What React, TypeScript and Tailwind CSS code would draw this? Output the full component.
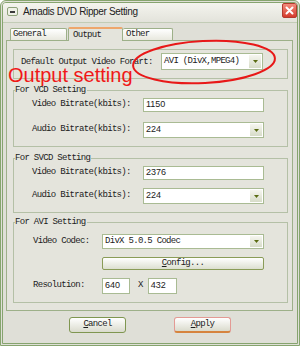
import React from "react";

const MONO = "font-['Liberation_Mono',monospace] text-[9px] tracking-[-0.7px] text-[#1c1c1c]";
const SANS = "font-['Liberation_Sans',Arial,sans-serif]";

function Arrow() {
  return (
    <div className="w-[12px] self-stretch my-[1px] mr-[1px] bg-gradient-to-b from-[#f6f6f0] to-[#d7dcc8] flex items-center justify-center">
      <svg width="5" height="3" viewBox="0 0 5 3">
        <path d="M0 0H5L2.5 3Z" fill="#5a6b12" />
      </svg>
    </div>
  );
}

function Select({ value, w, h, mono = false }: { value: string; w: string; h: string; mono?: boolean }) {
  return (
    <div className={`${w} ${h} bg-white border border-[#a9bb93] flex items-center`}>
      <span className={`flex-1 pl-[2px] whitespace-nowrap ${mono ? MONO : `${SANS} text-[9px] text-[#222]`}`}>{value}</span>
      <Arrow />
    </div>
  );
}

function Input({ value, w, h }: { value: string; w: string; h: string }) {
  return (
    <div className={`${w} ${h} bg-white border border-[#a9bb93] flex items-center`}>
      <span className={`${SANS} pl-[2px] text-[9px] text-[#222]`}>{value}</span>
    </div>
  );
}

function Legend({ children }: { children: React.ReactNode }) {
  return <legend className={`${MONO} ml-[1px] pr-[1px] leading-[12px]`}>{children}</legend>;
}

export default function App() {
  return (
    <div className="relative w-[300px] h-[346px] bg-[#dfdfd7] border-[3px] border-double border-[#86a46e] rounded-t-[6px] flex flex-col overflow-hidden">
      {/* Title bar */}
      <div className="h-[20px] shrink-0 flex items-start bg-gradient-to-b from-[#f4f4ee] to-[#e3e3db] border-b border-[#c2ccb6]">
        <div className="ml-[4px] mt-[4px] w-[11px] h-[9px] rounded-[2px] border border-[#8ea27a] bg-[#eef0e6] flex items-center justify-center">
          <div className="w-[5px] h-[2px] bg-[#3a3a3a]" />
        </div>
        <span className={`${SANS} ml-[5px] mt-[3px] text-[10px] leading-[12px] tracking-[-0.35px] text-[#222] whitespace-nowrap`}>
          Amadis DVD Ripper Setting
        </span>
        <div className="ml-auto w-[15px] h-[15px] rounded-[2px] border border-[#b23a2e] bg-gradient-to-b from-[#f28a7c] to-[#d4392b] flex items-center justify-center">
          <svg width="11" height="11" viewBox="0 0 11 11">
            <path d="M2.5 2.5L8.5 8.5M8.5 2.5L2.5 8.5" stroke="#fff" strokeWidth="2" strokeLinecap="round" />
          </svg>
        </div>
      </div>

      {/* Tabs */}
      <div className="relative z-10 mt-[4px] -mb-[1px] ml-[7px] h-[14px] flex items-end">
        <div className={`${MONO} w-[57px] h-[12px] mb-[1px] leading-[11px] pl-[2px] border border-b-0 border-[#9db089] rounded-t-[2px] bg-gradient-to-b from-white to-[#e8e8de]`}>
          General
        </div>
        <div className={`${MONO} ml-[1px] w-[55px] h-[14px] leading-[12px] pl-[4px] border border-b-0 border-[#9db089] border-t-2 border-t-[#eea66c] rounded-t-[2px] bg-[#e4e4dc]`}>
          Output
        </div>
        <div className={`${MONO} w-[50px] h-[12px] mb-[1px] leading-[11px] pl-[3px] border border-b-0 border-l-0 border-[#9db089] rounded-t-[2px] bg-gradient-to-b from-white to-[#e8e8de]`}>
          Other
        </div>
      </div>

      {/* Panel */}
      <div className="ml-[3px] w-[287px] border border-[#9db089] bg-[#e4e4dc] pt-[8px] pl-[6px] pr-[4px] pb-[7px] flex flex-col">
        {/* Format */}
        <div className="h-[30px] border border-[#b4c0a6] pt-[3px] flex items-start">
          <div className="h-[17px] flex items-center pl-[7px] w-[147px]">
            <span className={`${MONO} leading-[10px] whitespace-nowrap`}>Default Output Video Forart:</span>
          </div>
          <Select value="AVI (DivX,MPEG4)" w="w-[102px]" h="h-[17px]" mono />
        </div>

        {/* VCD */}
        <fieldset className="mt-[5px] border border-[#b4c0a6] pb-[8px]">
          <Legend>For VCD Setting</Legend>
          <div className="pt-[2px] flex flex-col gap-[10px]">
            <div className="flex items-center pl-[18px]">
              <span className={`${MONO} w-[111px] whitespace-nowrap`}>Video Bitrate(kbits):</span>
              <Input value="1150" w="w-[121px]" h="h-[14px]" />
            </div>
            <div className="flex items-center pl-[18px]">
              <span className={`${MONO} w-[111px] whitespace-nowrap`}>Audio Bitrate(kbits):</span>
              <Select value="224" w="w-[121px]" h="h-[16px]" />
            </div>
          </div>
        </fieldset>

        {/* SVCD */}
        <fieldset className="mt-[5px] border border-[#b4c0a6] pb-[8px]">
          <Legend>For SVCD Setting</Legend>
          <div className="pt-[2px] flex flex-col gap-[8px]">
            <div className="flex items-center pl-[18px]">
              <span className={`${MONO} w-[111px] whitespace-nowrap`}>Video Bitrate(kbits):</span>
              <Input value="2376" w="w-[121px]" h="h-[14px]" />
            </div>
            <div className="flex items-center pl-[18px]">
              <span className={`${MONO} w-[111px] whitespace-nowrap`}>Audio Bitrate(kbits):</span>
              <Select value="224" w="w-[121px]" h="h-[16px]" />
            </div>
          </div>
        </fieldset>

        {/* AVI */}
        <fieldset className="mt-[3px] border border-[#b4c0a6] pb-[8px]">
          <Legend>For AVI Setting</Legend>
          <div className="pt-[6px] flex flex-col gap-[8px]">
            <div className="flex items-center pl-[19px]">
              <span className={`${MONO} w-[69px] whitespace-nowrap`}>Video Codec:</span>
              <Select value="DivX 5.0.5 Codec" w="w-[162px]" h="h-[15px]" mono />
            </div>
            <div className="pl-[88px]">
              <div className={`${MONO} w-[162px] h-[13px] rounded-[2px] border border-[#8a9c58] bg-gradient-to-b from-white to-[#dcdfd0] flex items-center justify-center`}>
                <span><span className="underline">C</span>onfig...</span>
              </div>
            </div>
            <div className="flex items-center pl-[19px]">
              <span className={`${MONO} w-[69px] whitespace-nowrap`}>Resolution:</span>
              <Input value="640" w="w-[28px]" h="h-[16px]" />
              <span className={`${MONO} ml-[8px]`}>X</span>
              <div className="ml-[5px]">
                <Input value="432" w="w-[29px]" h="h-[16px]" />
              </div>
            </div>
          </div>
        </fieldset>
      </div>

      {/* Buttons */}
      <div className="mt-[6px] flex justify-center gap-[48px]">
        <div className={`${MONO} w-[57px] h-[16px] rounded-[3px] border border-[#7f9650] bg-gradient-to-b from-white to-[#dadbcd] flex items-center justify-center`}>
          <span><span className="underline">C</span>ancel</span>
        </div>
        <div className={`${MONO} w-[57px] h-[16px] rounded-[3px] border border-[#e39a94] border-b-2 border-b-[#d6843e] bg-gradient-to-b from-white to-[#dadbcd] flex items-center justify-center`}>
          <span><span className="underline">A</span>pply</span>
        </div>
      </div>

      {/* Annotation overlay */}
      <span className={`${SANS} absolute left-[5px] top-[65px] text-[20px] leading-[14px] text-[#f01818] whitespace-nowrap`}>
        Output setting
      </span>
      <svg className="absolute left-[-3px] top-[-3px] pointer-events-none" width="300" height="346" viewBox="0 0 300 346">
        <ellipse cx="204" cy="62" rx="71" ry="21" fill="none" stroke="#e81818" strokeWidth="2" transform="rotate(-3 204 62)" />
      </svg>
    </div>
  );
}
